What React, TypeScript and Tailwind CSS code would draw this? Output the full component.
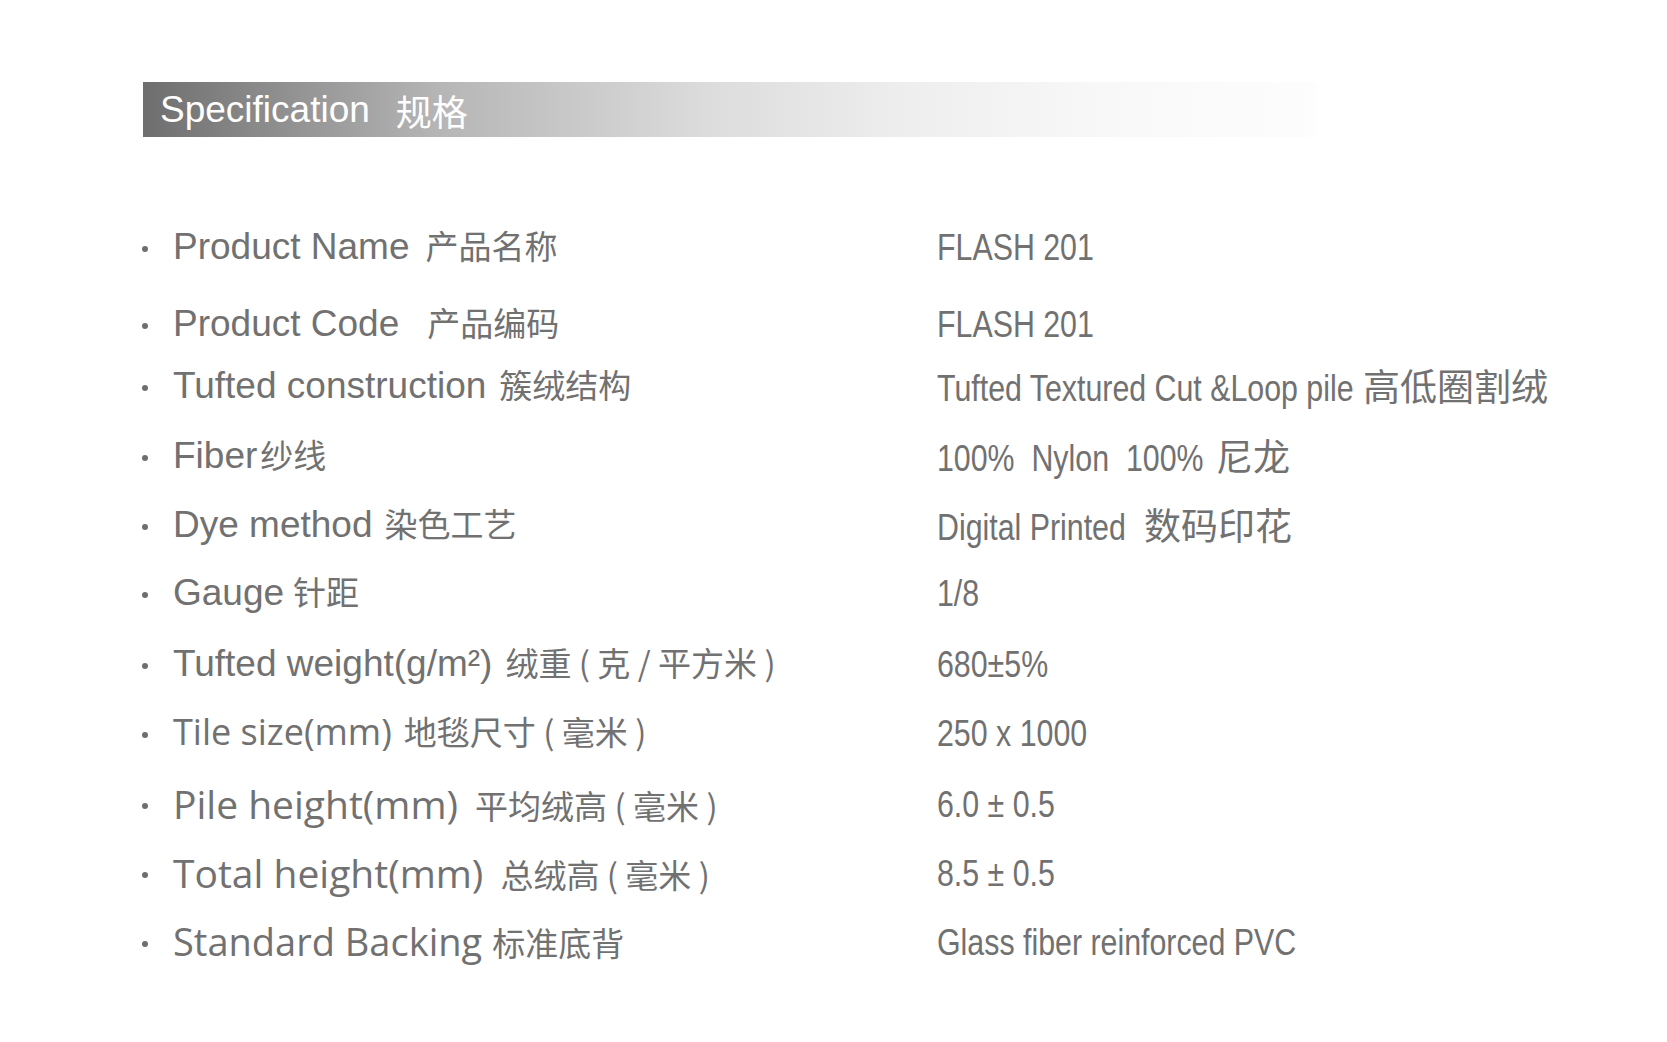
type Spec = {
  en: string;
  cn: string;
  enFont: string;
  cnGap: string;
  value: string;
  valueCn?: string;
  valueBox?: string;
  mt: string;
};

const arial = "font-['Liberation_Sans','Noto_Sans_CJK_SC',sans-serif] text-[37px]";
const segoe = "font-['Open_Sans','Noto_Sans_CJK_SC',sans-serif]";

const specs: Spec[] = [
  { en: 'Product Name', cn: '产品名称', enFont: arial, cnGap: 'ml-[16px]', value: 'FLASH 201', mt: 'mt-[81px]' },
  { en: 'Product Code', cn: '产品编码', enFont: arial, cnGap: 'ml-[28px]', value: 'FLASH 201', mt: 'mt-[21px]' },
  {
    en: 'Tufted construction',
    cn: '簇绒结构',
    enFont: arial,
    cnGap: 'ml-[13px]',
    value: 'Tufted Textured Cut &Loop pile',
    valueCn: '高低圈割绒',
    valueBox: 'w-[426px]',
    mt: 'mt-[6px]',
  },
  {
    en: 'Fiber',
    cn: '纱线',
    enFont: arial,
    cnGap: 'ml-[3px]',
    value: '100%  Nylon  100%',
    valueCn: '尼龙',
    valueBox: 'w-[279px]',
    mt: 'mt-[14px]',
  },
  {
    en: 'Dye method',
    cn: '染色工艺',
    enFont: arial,
    cnGap: 'ml-[12px]',
    value: 'Digital Printed',
    valueCn: '数码印花',
    valueBox: 'w-[207px]',
    mt: 'mt-[13px]',
  },
  { en: 'Gauge', cn: '针距', enFont: arial, cnGap: 'ml-[9px]', value: '1/8', mt: 'mt-[12px]' },
  { en: 'Tufted weight(g/m²)', cn: '绒重 ( 克 / 平方米 )', enFont: arial, cnGap: 'ml-[13px]', value: '680±5%', mt: 'mt-[15px]' },
  { en: 'Tile size(mm)', cn: '地毯尺寸 ( 毫米 )', enFont: `${segoe} text-[36px]`, cnGap: 'ml-[12px]', value: '250 x 1000', mt: 'mt-[13px]' },
  { en: 'Pile height(mm)', cn: '平均绒高 ( 毫米 )', enFont: `${segoe} text-[39px]`, cnGap: 'ml-[17px]', value: '6.0 ± 0.5', mt: 'mt-[15px]' },
  { en: 'Total height(mm)', cn: '总绒高 ( 毫米 )', enFont: `${segoe} text-[39px]`, cnGap: 'ml-[17px]', value: '8.5 ± 0.5', mt: 'mt-[13px]' },
  {
    en: 'Standard Backing',
    cn: '标准底背',
    enFont: `${segoe} text-[38px]`,
    cnGap: 'ml-[10px]',
    value: 'Glass fiber reinforced PVC',
    mt: 'mt-[13px]',
  },
];

function SpecRow({ spec }: { spec: Spec }) {
  return (
    <div className={`flex h-[56px] items-center pl-[142px] ${spec.mt}`}>
      <span className="mt-[6px] h-[6px] w-[6px] shrink-0 rounded-full bg-[#6e6e6e]" />
      <div className="ml-[25px] w-[764px] shrink-0 whitespace-pre leading-none">
        <span className={spec.enFont}>{spec.en}</span>
        <span className={`${spec.cnGap} font-['Noto_Sans_CJK_SC',sans-serif] text-[33px]`}>{spec.cn}</span>
      </div>
      {/* values are a condensed face: Arial squeezed to narrow width */}
      <div className="mt-[3px] flex items-baseline whitespace-pre leading-none">
        <span
          className={`inline-block origin-left scale-x-[0.82] font-['Liberation_Sans','Noto_Sans_CJK_SC',sans-serif] text-[37px] ${spec.valueBox ?? ''}`}
        >
          {spec.value}
        </span>
        {spec.valueCn && (
          <span className="font-['Noto_Sans_CJK_SC',sans-serif] text-[37px]">{spec.valueCn}</span>
        )}
      </div>
    </div>
  );
}

export default function App() {
  return (
    <div className="min-h-screen w-full bg-white pb-[60px] text-[#717171]">
      <div className="pt-[82px]">
        <div className="ml-[143px] flex h-[55px] w-[1173px] items-center bg-[linear-gradient(to_right,#6e6e6e_0%,#b5b5b5_25%,#dcdcdc_48%,#eeeeee_65%,#f8f8f8_82%,#fdfdfd_100%)] pl-[17px] leading-none text-white">
          <span className="font-['Liberation_Sans',sans-serif] text-[37px]">Specification</span>
          <span className="ml-[26px] font-['Noto_Sans_CJK_SC',sans-serif] text-[36px]">规格</span>
        </div>
      </div>

      <div>
        {specs.map(spec => (
          <SpecRow key={spec.en} spec={spec} />
        ))}
      </div>
    </div>
  );
}
